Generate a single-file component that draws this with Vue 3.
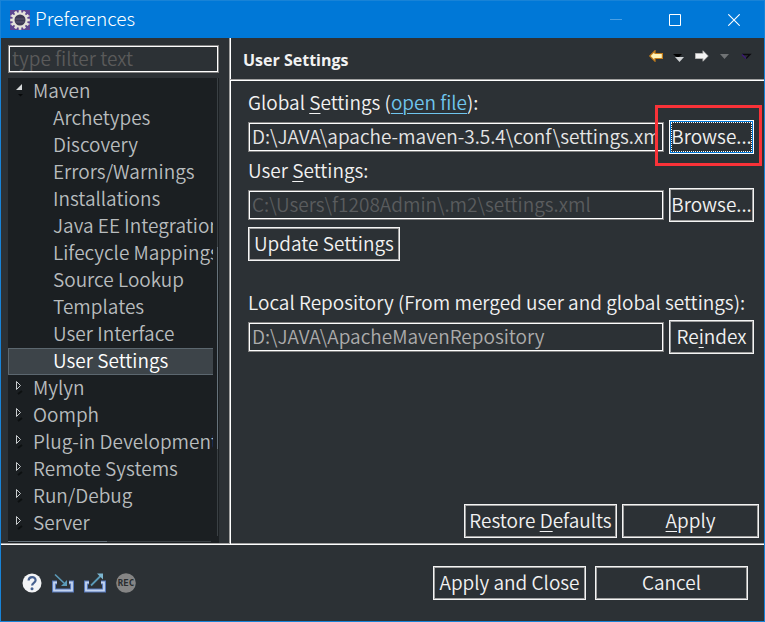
<script setup>
import { ref } from 'vue'

const filter = ref('')
const globalSettings = ref('D:\\JAVA\\apache-maven-3.5.4\\conf\\settings.xml')
const userSettings = ref('C:\\Users\\f1208Admin\\.m2\\settings.xml')
const repository = ref('D:\\JAVA\\ApacheMavenRepository')
const selected = ref('User Settings')

const rows = [
  { name: 'Maven', state: 'open' },
  ...[
    'Archetypes',
    'Discovery',
    'Errors/Warnings',
    'Installations',
    'Java EE Integration',
    'Lifecycle Mappings',
    'Source Lookup',
    'Templates',
    'User Interface',
    'User Settings',
  ].map((name) => ({ name, state: 'leaf' })),
  ...['Mylyn', 'Oomph', 'Plug-in Development', 'Remote Systems', 'Run/Debug', 'Server'].map(
    (name) => ({ name, state: 'closed' }),
  ),
]

const teeth = Array.from({ length: 12 }, (_, i) => i * 30)
</script>

<template>
  <div class="window">
    <header class="titlebar">
      <svg class="app-icon" viewBox="0 0 20 20" aria-hidden="true">
        <rect width="20" height="20" fill="#5c4590" />
        <path d="M0 6h20M0 14h20" stroke="#8170ad" stroke-width="2" />
        <g fill="#e4e1da">
          <rect
            v-for="a in teeth"
            :key="a"
            x="8.7"
            y="0.2"
            width="2.6"
            height="4"
            :transform="`rotate(${a} 10 10)`"
          />
        </g>
        <circle cx="10" cy="10" r="6.6" fill="#3c3852" stroke="#e4e1da" stroke-width="2.2" />
        <path d="M5.5 9h9M5.5 12h9" stroke="#5b5670" />
      </svg>
      <h1>Preferences</h1>
      <div class="controls">
        <button aria-label="Minimize" disabled>
          <svg viewBox="0 0 12 12"><path d="M0 5.5h12" stroke="#4ba0e4" /></svg>
        </button>
        <button aria-label="Maximize">
          <svg viewBox="0 0 12 12"><path d="M.5.5h11v11H.5z" fill="none" stroke="#fff" /></svg>
        </button>
        <button aria-label="Close">
          <svg viewBox="0 0 12 12"><path d="M.3.3l11.4 11.4M11.7.3L.3 11.7" stroke="#fff" stroke-width="1.1" /></svg>
        </button>
      </div>
    </header>

    <main class="body">
      <nav class="sidebar">
        <input v-model="filter" class="field filter" placeholder="type filter text" aria-label="Filter" />
        <div class="tree">
          <ul>
            <li v-for="row in rows" :key="row.name">
              <button
                class="node"
                :class="[row.state, { selected: row.name === selected }]"
                @click="selected = row.name"
              >
                <svg v-if="row.state === 'open'" class="twisty" viewBox="0 0 10 16">
                  <path d="M6 2v6H0z" fill="#d6d9da" />
                  <path d="M2 12h5l-2.500 2.500z" fill="#07090a" />
                </svg>
                <svg v-else-if="row.state === 'closed'" class="twisty" viewBox="0 0 10 16">
                  <path d="M.5 2.500v8L4.500 6.500z" fill="none" stroke="#c9cdcf" />
                  <path d="M2 15l4-3" stroke="#0d1011" stroke-width="2" />
                </svg>
                <span>{{ row.name }}</span>
              </button>
            </li>
          </ul>
          <div class="track"><div class="thumb"></div></div>
          <div class="track-x"><div class="thumb-x"></div></div>
        </div>
      </nav>

      <section class="page">
        <div class="page-head">
          <h2>User Settings</h2>
          <div class="history">
            <button aria-label="Back">
              <svg width="16" height="12" viewBox="0 0 16 12">
                <path d="M1.800 6L7 .8V3.500h7.400v5H7v2.700z" fill="#fff3b8" stroke="#c27c1b" stroke-width="1.200" />
              </svg>
            </button>
            <button aria-label="Back history">
              <svg width="12" height="12" viewBox="0 0 12 12">
                <path d="M0 4h9L5 8z" fill="#000" />
                <path d="M2 7h9l-4.500 5z" fill="#d0d3d5" />
              </svg>
            </button>
            <button aria-label="Forward">
              <svg width="16" height="12" viewBox="0 0 16 12">
                <path d="M14.200 6L9 .8V3.500H1.500v5H9v2.700z" fill="#f4f4f4" stroke="#b4b4b4" />
              </svg>
            </button>
            <button aria-label="Forward history">
              <svg width="12" height="12" viewBox="0 0 12 12"><path d="M1 4h9L5.500 9z" fill="#707375" /></svg>
            </button>
            <button aria-label="View menu">
              <svg width="12" height="12" viewBox="0 0 12 12">
                <path d="M2 4.500h8L6 8.500" fill="none" stroke="#0b0a0d" stroke-width="1.400" />
                <path d="M2 4.500l4 4" stroke="#3d1a78" stroke-width="1.400" />
              </svg>
            </button>
          </div>
        </div>

        <form class="settings" @submit.prevent>
          <div class="caption">
            <label for="global">Global <u>S</u>ettings </label>(<a href="#">open file</a>):
          </div>
          <div class="line">
            <input id="global" v-model="globalSettings" class="field" />
            <div class="callout"><button type="button" class="btn side focused">Browse...</button></div>
          </div>
          <label class="caption" for="user">User <u>S</u>ettings:</label>
          <div class="line">
            <input id="user" v-model="userSettings" class="field muted" readonly />
            <button type="button" class="btn side">Browse...</button>
          </div>
          <button type="button" class="btn update">Update Settings</button>
          <label class="caption" for="repo">Local Repository (From merged user and global settings):</label>
          <div class="line">
            <input id="repo" v-model="repository" class="field readonly" readonly />
            <button type="button" class="btn side">Re<u>i</u>ndex</button>
          </div>
        </form>

        <div class="page-actions">
          <button class="btn wide">Restore <u>D</u>efaults</button>
          <button class="btn apply"><u>A</u>pply</button>
        </div>
      </section>
    </main>

    <footer class="footer">
      <div class="tools">
        <button aria-label="Help">
          <svg width="20" height="20" viewBox="0 0 20 20">
            <circle cx="10" cy="10" r="9.500" fill="#f3f4f6" />
            <path d="M6.600 7.600C6.600 3 13.600 3 13.600 7.200c0 2.700-3.500 2.600-3.500 5.300" fill="none" stroke="#46608f" stroke-width="2.200" />
            <circle cx="10" cy="15.700" r="1.500" fill="#46608f" />
          </svg>
        </button>
        <button aria-label="Import">
          <svg width="22" height="20" viewBox="0 0 22 20">
            <path d="M5 9.500H2v8h18v-8h-3" fill="none" stroke="#5678bb" stroke-width="4" />
            <path d="M5 9.500H2v8h18v-8h-3" fill="none" stroke="#c3d3ef" stroke-width="1.800" />
            <path d="M3 1.500l9 8.500" stroke="#5b9ab8" stroke-width="1.600" />
            <path d="M15 13V7l-6 6z" fill="#5b9ab8" />
          </svg>
        </button>
        <button aria-label="Export">
          <svg width="22" height="20" viewBox="0 0 22 20">
            <path d="M5 9.500H2v8h18v-8h-3" fill="none" stroke="#5678bb" stroke-width="4" />
            <path d="M5 9.500H2v8h18v-8h-3" fill="none" stroke="#c3d3ef" stroke-width="1.800" />
            <path d="M7 12.500L17 2.500" stroke="#5b9ab8" stroke-width="1.800" />
            <path d="M13 .5h6v6z" fill="#7db6d0" />
          </svg>
        </button>
        <button aria-label="Record">
          <svg width="20" height="20" viewBox="0 0 20 20">
            <circle cx="10" cy="10" r="9.800" fill="#858585" />
            <text x="10" y="13" text-anchor="middle" class="rec">REC</text>
          </svg>
        </button>
      </div>
      <div class="dialog-actions">
        <button class="btn wide">Apply and Close</button>
        <button class="btn wide">Cancel</button>
      </div>
    </footer>
  </div>
</template>

<style>
body {
  background: #2c3135;
}
</style>

<style scoped>
* {
  box-sizing: border-box;
}
.window {
  display: flex;
  flex-direction: column;
  min-height: 100vh;
  border: 1px solid #1883d7;
  background: #2c3135;
  color: #f2f2f2;
  font: 350 19px/23px "Noto Sans CJK SC", "Noto Sans", sans-serif;
}
button {
  margin: 0;
  padding: 0;
  border: 0;
  background: none;
  color: inherit;
  font: inherit;
}
h1,
h2 {
  margin: 0;
  font: inherit;
}
u {
  text-decoration-thickness: 1px;
  text-underline-offset: 3px;
}
svg {
  display: block;
}

.titlebar {
  display: flex;
  align-items: center;
  height: 37px;
  padding: 0 1px 0 9px;
  background: #0078d7;
  color: #fff;
}
.titlebar h1 {
  padding-bottom: 4px;
  font-weight: 300;
}
.app-icon {
  width: 20px;
  height: 20px;
  margin-right: 5px;
}
.controls {
  display: flex;
  margin-left: auto;
}
.controls button {
  display: grid;
  place-items: center;
  width: 59px;
  height: 35px;
}
.controls svg {
  width: 12px;
  height: 12px;
}

.body {
  flex: 1;
  display: flex;
  border-bottom: 1px solid #fff;
  box-shadow: inset 0 -1px #a0a0a0;
}
.sidebar {
  display: flex;
  flex-direction: column;
  gap: 5px;
  width: 228px;
  padding: 7px 10px 1px 7px;
}
.field {
  flex: 1;
  min-width: 0;
  height: 30px;
  margin: 0;
  padding: 0 7px 4px 3px;
  border: 1px solid #828282;
  border-radius: 0;
  outline: 1px solid #fff;
  outline-offset: -2px;
  background: #2c3135;
  color: #e6e6e6;
  font: inherit;
}
.filter {
  flex: none;
  width: 100%;
  height: 28px;
  padding: 0 3px 4px;
}
.filter::placeholder {
  color: #5a5a5a;
  opacity: 1;
}
.muted {
  color: #5a5c5e;
}
.readonly {
  color: #acacac;
}

.tree {
  flex: 1;
  display: grid;
  grid-template-columns: 1fr 1px;
  grid-template-rows: 1fr 1px;
  column-gap: 4px;
  row-gap: 4px;
  padding: 0 1px 1px 0;
  background: #1b1f22;
  color: #b8bcbe;
}
.tree ul {
  margin: 0;
  padding: 0;
  list-style: none;
  overflow: hidden;
}
.node {
  display: flex;
  align-items: center;
  width: 100%;
  height: 27px;
  padding: 0 0 4px 7px;
  white-space: nowrap;
  border: 1px solid transparent;
}
.node.leaf {
  padding-left: 44px;
}
.node.selected {
  border-color: #5c676f;
  border-right: 0;
  background: #3d4449;
  color: #fff;
}
.twisty {
  flex: none;
  width: 10px;
  height: 16px;
  margin-right: 7px;
}
.track {
  height: 458px;
  padding-top: 169px;
  background: #3a4044;
}
.thumb {
  height: 202px;
  background: #66727b;
}
.track-x {
  margin-right: 2px;
  background: #3a4044;
}
.thumb-x {
  width: 49%;
  height: 1px;
  background: #66727b;
}

.page {
  flex: 1;
  min-width: 0;
  display: flex;
  flex-direction: column;
  border-left: 1px solid #a0a0a0;
  box-shadow: inset 1px 0 #fff;
}
.page-head {
  display: flex;
  align-items: center;
  justify-content: space-between;
  height: 43px;
  padding: 1px 12px 0 13px;
  border-bottom: 1px solid #fff;
  box-shadow: inset 0 -1px #a0a0a0;
}
.page-head h2 {
  padding-top: 2px;
  font-family: "Open Sans", "Noto Sans", sans-serif;
  font-size: 16px;
  font-weight: 700;
}
.history {
  display: flex;
  align-items: center;
  gap: 9px;
  padding-bottom: 8px;
}

.settings {
  display: flex;
  flex-direction: column;
  padding: 5px 10px 0 18px;
}
.caption {
  display: block;
  padding-bottom: 2px;
  line-height: 32px;
  white-space: pre-wrap;
}
.caption a {
  color: #6fc5ee;
  text-decoration-thickness: 1px;
  text-underline-offset: 3px;
}
.line {
  display: flex;
  align-items: center;
  gap: 5px;
}
.btn {
  height: 34px;
  padding: 0 5px 3px;
  border: 1px solid #f4f4f4;
  outline: 1px solid #a0a0a0;
  outline-offset: -2px;
  white-space: nowrap;
}
.btn.side {
  width: 85px;
  padding: 0 0 3px;
}
.btn.focused {
  border-color: #fff;
  outline: 1px dotted #fff;
  outline-offset: -3px;
  box-shadow: inset 0 0 0 1px #0078d7;
}
.callout {
  position: relative;
}
.callout::after {
  content: "";
  position: absolute;
  inset: -15px -8px -12px -14px;
  border: 3px solid #fa3238;
  pointer-events: none;
}
.update {
  align-self: flex-start;
  margin: 5px 0 25px;
}
.btn.wide {
  width: 153px;
  padding: 0 0 3px;
}
.apply {
  width: 137px;
}
.page-actions {
  display: flex;
  justify-content: flex-end;
  gap: 5px;
  margin-top: auto;
  padding: 20px 5px 6px;
}

.footer {
  display: flex;
  align-items: center;
  justify-content: space-between;
  height: 76px;
  padding: 0 16px 0 21px;
}
.tools {
  display: flex;
  gap: 10px;
}
.rec {
  font: 700 9px "DejaVu Sans Mono", monospace;
  fill: #292d30;
}
.dialog-actions {
  display: flex;
  gap: 9px;
}
</style>
